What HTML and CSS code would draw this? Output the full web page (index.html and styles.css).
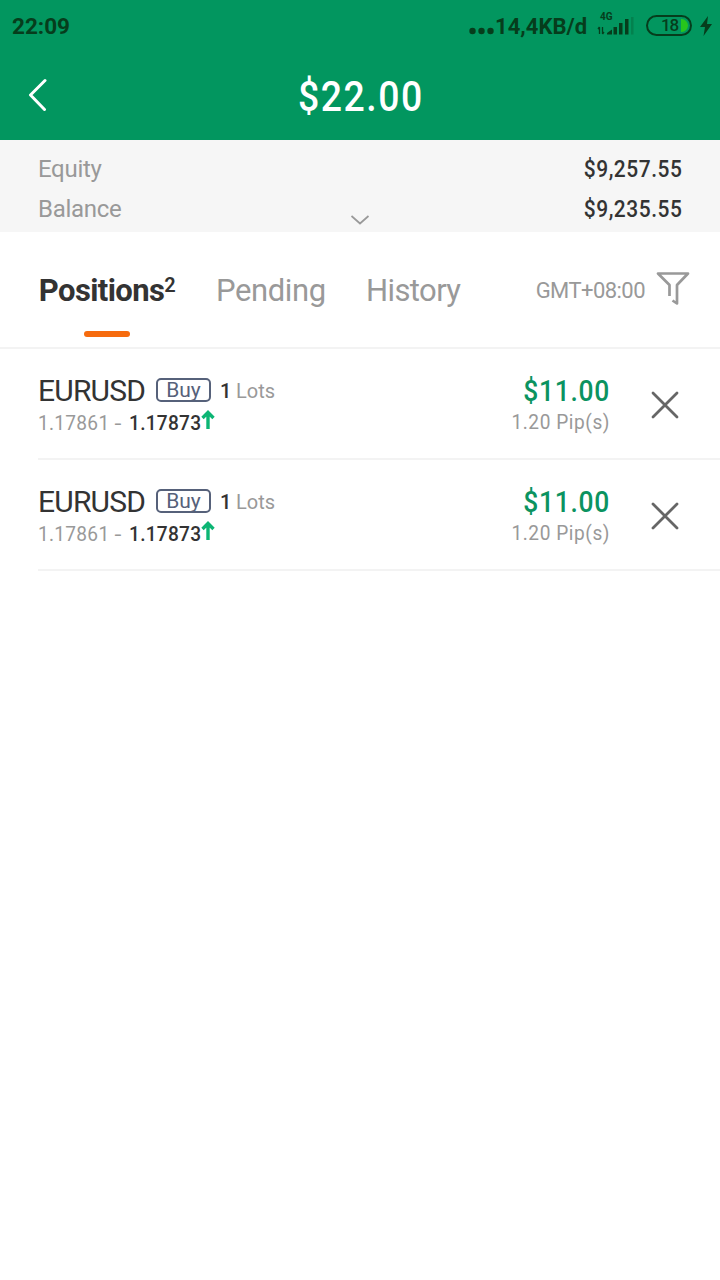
FILE: index.html
```html
<!DOCTYPE html>
<html lang="en">
<head>
<meta charset="utf-8">
<title>Positions</title>
<link rel="stylesheet" href="styles.css">
</head>
<body>
<header class="top">
  <div class="status">
    <span class="clock">22:09</span>
    <div class="status-right">
      <svg class="dots" width="26" height="8" viewBox="0 0 26 8"><circle cx="3.500" cy="4" r="3.200"/><circle cx="12.500" cy="4" r="3.200"/><circle cx="21.500" cy="4" r="3.200"/></svg>
      <span class="speed">14,4KB/d</span>
      <div class="signal">
        <span class="net">4G</span>
        <svg width="38" height="18" viewBox="0 0 38 18">
          <path d="M2.500 17V10M1 12L2.500 10M5.500 10V17M5.500 17L7 15" fill="none" stroke="#063d1c" stroke-width="1.300"/>
          <path d="M10 17.500V16L15 12.500V17.500ZM16.500 10h3.500v7.500h-3.500ZM22 6h3.500v11.500h-3.500ZM28 2h3.500v15.500h-3.500Z" fill="#063d1c"/>
          <path d="M34 0h2.500v17.500h-2.500Z" fill="#03814e"/>
        </svg>
      </div>
      <div class="battery"><span class="charge">18</span></div>
      <svg class="bolt" width="12" height="20" viewBox="0 0 12 20"><path d="M8 0L0 11H5L3.500 20L12 8H7Z" fill="#063d1c"/></svg>
    </div>
  </div>
  <div class="title-bar">
    <svg class="back" width="20" height="34" viewBox="0 0 20 34"><path d="M18 2.500L3.500 17L17.500 31.500" fill="none" stroke="#fff" stroke-width="3" stroke-linecap="round" stroke-linejoin="round"/></svg>
    <h1 class="total">$22.00</h1>
  </div>
</header>
<section class="summary">
  <div class="sum-row"><span>Equity</span><span class="money">$9,257.55</span></div>
  <div class="sum-row"><span>Balance</span><span class="money">$9,235.55</span></div>
  <svg class="expand" width="20" height="10" viewBox="0 0 20 10"><path d="M1.500 1L10 8.500L18.500 1" fill="none" stroke="#999" stroke-width="1.700"/></svg>
</section>
<nav class="tabs">
  <div class="tab active"><span class="tab-name">Positions<span class="count">2</span></span><i class="marker"></i></div>
  <div class="tab pending">Pending</div>
  <div class="tab history">History</div>
  <div class="zone"><span>GMT+08:00</span>
    <svg width="36" height="36" viewBox="0 0 36 36"><path d="M14.500 26V15L3 3.500H33L22 15V33.500L17.500 30.500" fill="none" stroke="#999" stroke-width="2.700" stroke-linejoin="round"/></svg>
  </div>
</nav>
<main class="list">
  <article class="position">
    <div class="deal">
      <div class="line1"><span class="symbol">EURUSD</span><span class="side">Buy</span><b class="qty">1</b><span class="lots">Lots</span></div>
      <div class="line2"><span class="open">1.17861 <span class="dash">-</span></span><span class="now">1.17873</span><svg width="14" height="20" viewBox="0 0 14 20"><path d="M7 19V2.500M1.500 8L7 2.500L12.500 8" fill="none" stroke="#0cb574" stroke-width="3.400"/></svg></div>
    </div>
    <div class="result"><div class="profit">$11.00</div><div class="pips">1.20 Pip(s)</div></div>
    <svg class="close" width="28" height="28" viewBox="0 0 28 28"><path d="M2 2L26 26M26 2L2 26" stroke="#666" stroke-width="2.800" stroke-linecap="round"/></svg>
  </article>
  <article class="position">
    <div class="deal">
      <div class="line1"><span class="symbol">EURUSD</span><span class="side">Buy</span><b class="qty">1</b><span class="lots">Lots</span></div>
      <div class="line2"><span class="open">1.17861 <span class="dash">-</span></span><span class="now">1.17873</span><svg width="14" height="20" viewBox="0 0 14 20"><path d="M7 19V2.500M1.500 8L7 2.500L12.500 8" fill="none" stroke="#0cb574" stroke-width="3.400"/></svg></div>
    </div>
    <div class="result"><div class="profit">$11.00</div><div class="pips">1.20 Pip(s)</div></div>
    <svg class="close" width="28" height="28" viewBox="0 0 28 28"><path d="M2 2L26 26M26 2L2 26" stroke="#666" stroke-width="2.800" stroke-linecap="round"/></svg>
  </article>
</main>
</body>
</html>
```
FILE: styles.css
```css
* { box-sizing: border-box; }
body { margin: 0; width: 720px; min-height: 1280px; background: #fff; color: #333; font-family: Roboto, sans-serif; white-space: nowrap; }
svg { display: block; flex: none; }
.top { height: 140px; background: #02965f; }
.status { display: flex; justify-content: space-between; height: 52px; padding: 0 8px 0 12px; color: #063d1c; font-weight: 700; }
.clock { font-size: 22.5px; line-height: 53px; }
.status-right { display: flex; }
.dots { margin-top: 27px; fill: #063d1c; }
.speed { width: 92px; font-size: 22px; line-height: 53px; letter-spacing: 0.05px; }
.signal { width: 38px; margin: 11px 0 0 10px; }
.net { display: block; height: 6px; padding-left: 3px; font-size: 10px; line-height: 12px; }
.battery { width: 46px; height: 21px; margin: 15px 0 0 11px; padding: 2px; border: 2px solid #063d1c; border-radius: 11px; }
.charge { display: block; height: 13px; padding-left: 11px; border-radius: 8px; background: linear-gradient(90deg, transparent 31px, #27c51c 31px); font-size: 17px; font-weight: 500; line-height: 13px; letter-spacing: -1.2px; }
.bolt { margin: 16px 0 0 8px; }
.title-bar { display: grid; grid-template-columns: 28px 1fr 28px; align-items: center; height: 88px; padding: 0 27px; }
.back { margin-top: -4px; }
.total { margin: 0; padding-left: 2px; color: #fff; font-size: 42px; font-weight: 500; line-height: 90px; letter-spacing: 1.7px; text-align: center; transform: scaleX(0.89); }
.summary { position: relative; height: 92px; padding: 9px 38px 0; background: #f6f6f6; }
.sum-row { display: flex; justify-content: space-between; height: 40px; color: #999; font-size: 24px; line-height: 41px; letter-spacing: -0.3px; }
.money { color: #333; font-size: 23px; font-weight: 500; line-height: 42px; letter-spacing: 0.6px; transform: scaleX(0.91); transform-origin: right; }
.expand { position: absolute; left: 350px; bottom: 7px; }
.tabs { display: flex; height: 117px; padding-left: 38px; border-bottom: 2px solid #f3f3f3; color: #999; font-size: 31px; line-height: 117px; }
.tab { letter-spacing: -0.4px; }
.active { display: flex; flex-direction: column; align-items: center; width: 178px; padding-right: 40px; color: #333; }
.tab-name { height: 99px; font-size: 31px; font-weight: 700; letter-spacing: -0.6px; }
.count { font-size: 20px; font-weight: 600; vertical-align: 9px; line-height: 0; }
.marker { width: 46px; height: 6px; border-radius: 3px; background: #f66b0e; }
.pending { width: 150px; }
.history { letter-spacing: -0.6px; }
.zone { display: flex; gap: 10px; margin-left: auto; padding-right: 29px; font-size: 22px; letter-spacing: -0.55px; }
.zone svg { margin-top: 38px; }
.position { display: flex; height: 111px; margin-left: 38px; padding-top: 24px; border-bottom: 2px solid #f3f3f3; }
.deal { width: 250px; }
.line1 { display: flex; height: 36px; line-height: 36px; }
.symbol { width: 118px; font-size: 30px; letter-spacing: -0.8px; }
.side { width: 55px; height: 24px; margin-top: 5px; border: 2px solid #56617a; border-radius: 5px; color: #56617a; font-size: 21px; line-height: 21px; text-align: center; }
.qty { width: 16px; margin-left: 9px; font-size: 20px; font-weight: 500; }
.lots { color: #999; font-size: 20px; }
.line2 { display: flex; height: 28px; font-size: 21px; line-height: 28px; letter-spacing: 0.3px; }
.open { width: 91px; color: #999; transform: scaleX(0.91); transform-origin: left; }
.dash { display: inline-block; transform: scaleX(1.3); transform-origin: left; }
.now { width: 72px; font-weight: 500; transform: scaleX(0.91); transform-origin: left; }
.line2 svg { margin-top: 1px; }
.result { width: 322px; text-align: right; }
.profit { height: 36px; color: #0b9360; font-size: 29px; font-weight: 500; line-height: 36px; letter-spacing: 0.8px; transform: scaleX(0.91); transform-origin: right; }
.pips { color: #999; font-size: 21px; line-height: 27px; letter-spacing: 0.6px; transform: scaleX(0.91); transform-origin: right; }
.close { margin: 18px 0 0 41px; }
```
